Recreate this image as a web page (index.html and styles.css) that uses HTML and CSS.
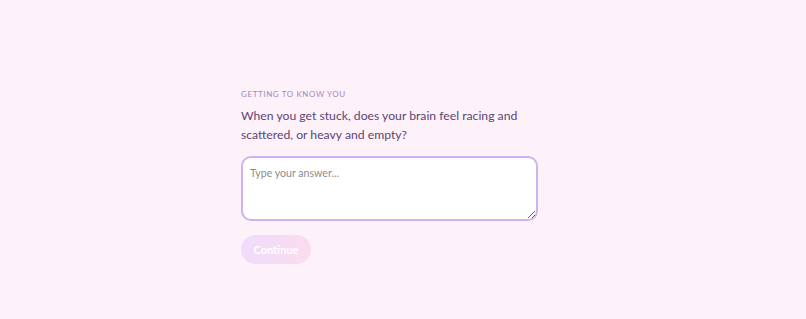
FILE: index.html
```html
<!DOCTYPE html>
<html lang="en">
<head>
<meta charset="UTF-8">
<meta name="viewport" content="width=device-width, initial-scale=1.0">
<title>Getting to know you</title>
<link rel="stylesheet" href="styles.css">
</head>
<body>

<div class="container">
    <p class="eyebrow">Getting to know you</p>
    <h2 class="question">When you get stuck, does your brain feel racing and scattered, or heavy and empty?</h2>
    <textarea class="answer" placeholder="Type your answer..." autofocus></textarea>
    <button class="continue" disabled>Continue</button>
</div>

</body>
</html>
```

FILE: styles.css
```css
body {
    margin: 0;
    background-color: #fdf2fa;
    font-family: Lato, "Open Sans", sans-serif;
}

.container {
    width: 324px;
    margin: 0 auto;
    padding-top: 88px;
    display: flex;
    flex-direction: column;
    align-items: flex-start;
}

.eyebrow {
    margin: 0;
    font-size: 8px;
    line-height: 12px;
    letter-spacing: 0.6px;
    text-transform: uppercase;
    color: #a487b8;
}

.question {
    margin: 6px 0 0;
    font-size: 12.2px;
    font-weight: 400;
    line-height: 19px;
    color: #5c4474;
}

.answer {
    box-sizing: border-box;
    width: 297px;
    height: 65px;
    margin-top: 12px;
    padding: 9px 7px;
    border: 2px solid #cfb2f0;
    border-radius: 10px;
    background: #fff;
    font-family: inherit;
    font-size: 10.6px;
    color: #333;
    caret-color: #333;
    outline: none;
    resize: vertical;
}

.answer::placeholder {
    color: #8c8c8c;
}

.continue {
    margin-top: 14px;
    width: 70px;
    height: 29px;
    border: none;
    border-radius: 15px;
    background: linear-gradient(90deg, #efdcfb, #fbdcee);
    color: #fff;
    font-family: inherit;
    font-size: 11px;
    font-weight: 700;
}
```
